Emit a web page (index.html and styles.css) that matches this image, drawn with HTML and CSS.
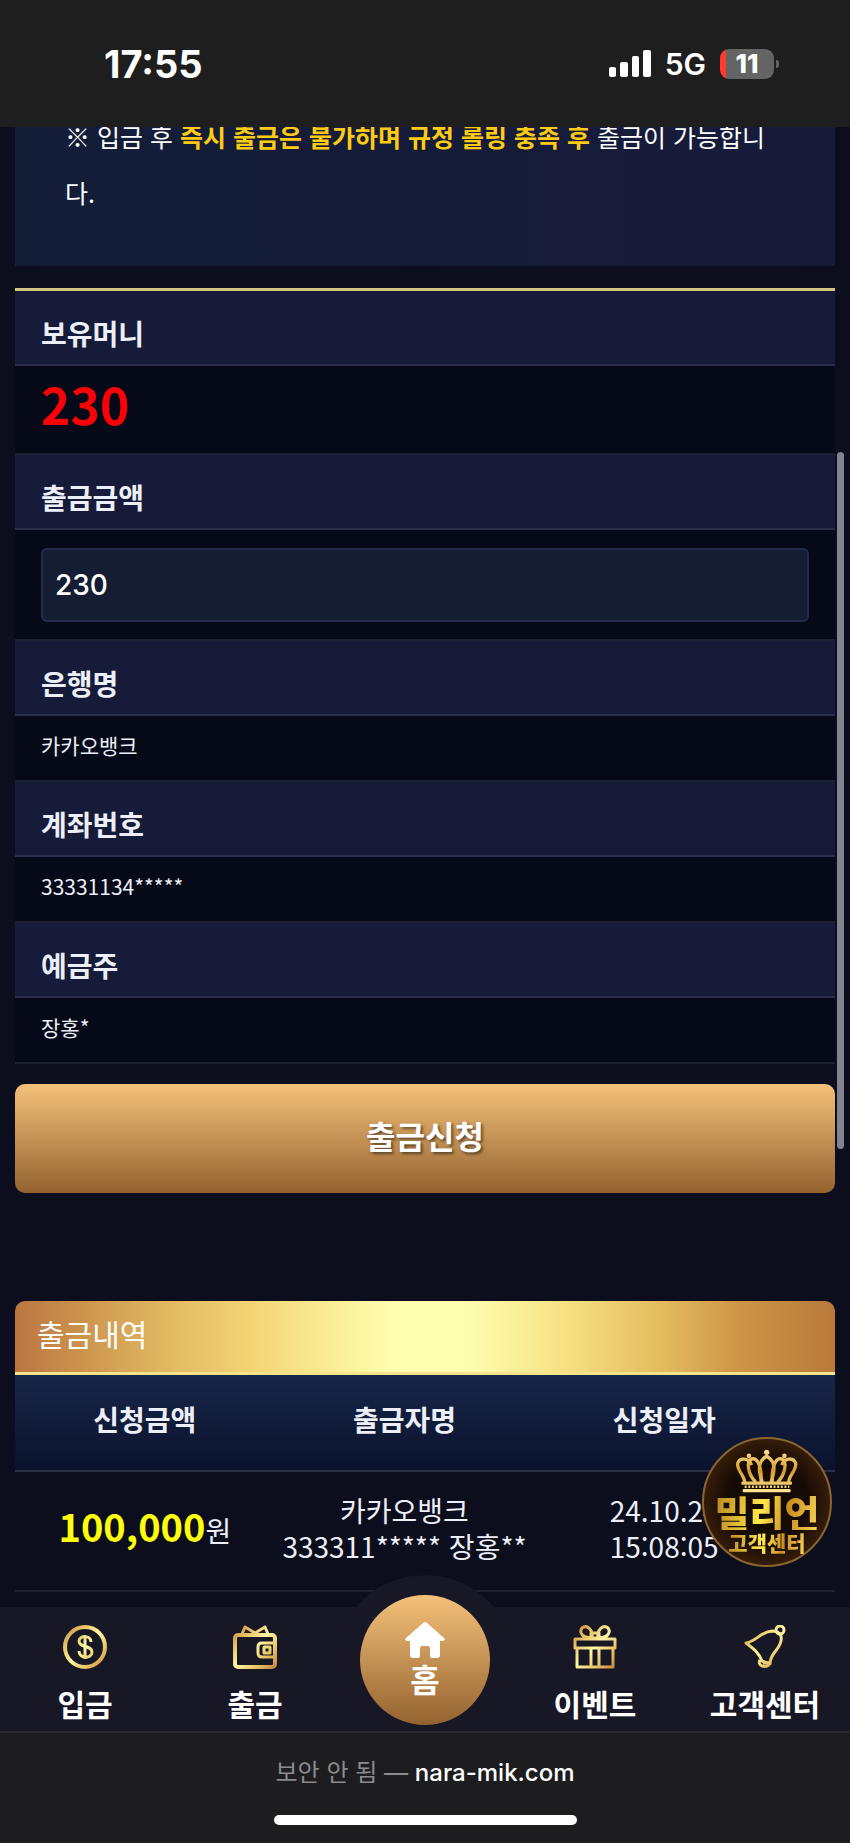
FILE: index.html
```html
<!DOCTYPE html>
<html lang="ko">
<head>
    <meta charset="UTF-8">
    <meta name="viewport" content="width=device-width, initial-scale=1.0">
    <title>출금신청</title>
    <link rel="stylesheet" href="styles.css">
</head>
<body>
    <header class="status-bar">
        <span class="clock">17:55</span>
        <div class="status-icons">
            <svg class="signal" viewBox="0 0 42 27" aria-hidden="true">
                <rect x="0" y="17" width="7" height="10" rx="2"/>
                <rect x="11" y="12" width="8" height="15" rx="2"/>
                <rect x="23" y="6" width="7" height="21" rx="2"/>
                <rect x="34" y="0" width="8" height="27" rx="2"/>
            </svg>
            <span class="network">5G</span>
            <span class="battery">11</span>
        </div>
    </header>

    <main>
        <p class="notice">※ 입금 후 <strong>즉시 출금은 불가하며 규정 롤링 충족 후</strong> 출금이 가능합니다.</p>

        <form>
            <div class="fields">
                <div class="field-name">보유머니</div>
                <div class="field-value money">230</div>
                <label class="field-name" for="amount">출금금액</label>
                <div class="field-value field-input">
                    <input type="text" id="amount" inputmode="numeric" value="230">
                </div>
                <div class="field-name">은행명</div>
                <div class="field-value">카카오뱅크</div>
                <div class="field-name">계좌번호</div>
                <div class="field-value">33331134*****</div>
                <div class="field-name">예금주</div>
                <div class="field-value">장홍*</div>
            </div>
            <button type="submit" class="submit-btn">출금신청</button>
        </form>

        <section class="history">
            <h2>출금내역</h2>
            <table>
                <thead>
                    <tr>
                        <th>신청금액</th>
                        <th>출금자명</th>
                        <th>신청일자</th>
                        <th class="state"></th>
                    </tr>
                </thead>
                <tbody>
                    <tr>
                        <td><b class="amount">100,000</b>원</td>
                        <td>카카오뱅크<br>333311***** 장홍**</td>
                        <td>24.10.24<br>15:08:05</td>
                        <td></td>
                    </tr>
                </tbody>
            </table>
            <a href="#" class="support">
                <svg viewBox="0 0 200 140" aria-hidden="true">
                    <defs>
                        <linearGradient id="crown" x1="0" y1="0" x2="0" y2="140" gradientUnits="userSpaceOnUse">
                            <stop offset="0" stop-color="#ffe89a"/>
                            <stop offset="0.5" stop-color="#d79b2c"/>
                            <stop offset="1" stop-color="#fff0a0"/>
                        </linearGradient>
                    </defs>
                    <g fill="none" stroke="url(#crown)" stroke-width="10">
                        <path d="M32 104C32 84 6 66 11 46c6-18 34-16 42 6"/>
                        <path d="M166 104c0-20 26-38 21-58-6-18-34-16-42 6"/>
                        <path d="M66 104C44 84 34 40 54 33c22-4 30 34 28 71"/>
                        <path d="M132 104c22-20 32-64 12-71-22-4-30 34-28 71"/>
                        <path d="M86 104C72 66 72 40 99 25c27 15 27 41 13 79"/>
                    </g>
                    <g fill="url(#crown)">
                        <circle cx="99" cy="13" r="8"/>
                        <circle cx="45" cy="24" r="7"/>
                        <circle cx="153" cy="24" r="7"/>
                        <rect x="22" y="102" width="154" height="10" rx="3"/>
                        <rect x="26" y="125" width="146" height="10" rx="3"/>
                    </g>
                    <path d="M32 118h136" stroke="#f5d469" stroke-width="8" stroke-dasharray="6 5"/>
                </svg>
                <span class="brand">밀리언</span>
                <span class="center">고객센터</span>
            </a>
        </section>
    </main>
    <div class="scroll-thumb"></div>

    <nav class="tab-bar">
        <a href="#">
            <svg class="icon" viewBox="0 0 44 44" aria-hidden="true">
                <defs>
                    <linearGradient id="gold" x1="0" y1="0" x2="44" y2="44" gradientUnits="userSpaceOnUse">
                        <stop offset="0" stop-color="#c67d3c"/>
                        <stop offset="0.28" stop-color="#e9c868"/>
                        <stop offset="0.5" stop-color="#fff6a4"/>
                        <stop offset="0.72" stop-color="#e9c868"/>
                        <stop offset="1" stop-color="#c67d3c"/>
                    </linearGradient>
                </defs>
                <circle cx="22" cy="22" r="20" stroke-width="4"/>
                <path d="M28 17c0-7-12-7-12-1 0 7 13 4 13 11 0 7-13 7-13-1M22 10v24"/>
            </svg>
            <span>입금</span>
        </a>
        <a href="#">
            <svg class="icon" viewBox="0 0 44 44" aria-hidden="true">
                <path d="M5 10h34a3 3 0 0 1 3 3v26a3 3 0 0 1-3 3H5a3 3 0 0 1-3-3V13a3 3 0 0 1 3-3z" stroke-width="4"/>
                <path d="M9 9l3-7 10 6-5 3M35 9l-3-7-10 6 5 3M42 18H29q-4 0-4 4v6q0 4 4 4h13"/>
                <rect x="31" y="22" width="6" height="6"/>
            </svg>
            <span>출금</span>
        </a>
        <a href="#" class="home">
            <svg viewBox="0 0 40 36" aria-hidden="true">
                <path d="M18 1q2-2 4 0l17 15q2 2-1 3h-3v14q0 3-3 3h-5q-2 0-2-2v-8q0-2-2-2h-6q-2 0-2 2v8q0 2-2 2H8q-3 0-3-3V19H2q-3-1-1-3z"/>
            </svg>
            <span>홈</span>
        </a>
        <a href="#">
            <svg class="icon" viewBox="0 0 44 44" aria-hidden="true">
                <path d="M2 14h40v9H2zM4 23h36v19H4zM18 23v19M26 23v19M19 12C9 14 6 7 9 3c5-4 11 2 10 9zM25 12c10 2 13-5 10-9-5-4-11 2-10 9zM18 8h8v5h-8z"/>
            </svg>
            <span>이벤트</span>
        </a>
        <a href="#">
            <svg class="icon" viewBox="0 0 44 44" aria-hidden="true">
                <path d="M3 18C14 16 17 7 29 6c9 0 11 6 8 13-3 8-10 10-10 20l-8-3c-3-8-8-12-16-18z"/>
                <circle cx="37" cy="5" r="4"/>
                <path d="M17 35c-3 6 5 8 9 5M20 38h7"/>
            </svg>
            <span>고객센터</span>
        </a>
    </nav>

    <footer class="address-bar">
        <p>보안 안 됨 — <b>nara-mik.com</b></p>
        <div class="home-indicator"></div>
    </footer>
</body>
</html>
```

FILE: styles.css
```css
* {
    margin: 0;
    padding: 0;
    box-sizing: border-box;
}

body {
    position: relative;
    font-family: 'Noto Sans CJK KR', sans-serif;
    background: #0c0e1d;
    color: #eceef8;
}

a {
    color: inherit;
    text-decoration: none;
}

/* status bar */
.status-bar {
    position: fixed;
    top: 0;
    left: 0;
    right: 0;
    z-index: 10;
    height: 127px;
    padding: 0 76px 0 104px;
    display: flex;
    justify-content: space-between;
    align-items: center;
    background: #1e1e1e;
    color: #fff;
    font-family: 'Inter', sans-serif;
}

.clock {
    font-size: 38px;
    font-weight: 700;
}

.status-icons {
    display: flex;
    align-items: center;
    gap: 14px;
}

.signal {
    width: 42px;
    height: 27px;
    fill: #fff;
}

.network {
    font-size: 30px;
    font-weight: 600;
}

.battery {
    position: relative;
    width: 54px;
    height: 30px;
    border-radius: 9px;
    background: linear-gradient(to right, #ff3b30 6px, #646464 6px);
    font-size: 26px;
    font-weight: 800;
    line-height: 30px;
    text-align: center;
}

.battery::after {
    content: "";
    position: absolute;
    right: -5px;
    top: 11px;
    width: 3px;
    height: 8px;
    border-radius: 0 4px 4px 0;
    background: #646464;
}

main {
    padding: 0 15px 15px;
}

.notice {
    padding: 108px 50px 46px;
    background: linear-gradient(to right, #131d38, #171b3a);
    color: #fff;
    font-size: 25px;
    line-height: 56px;
    word-break: break-all;
}

.notice strong {
    color: #ffcb12;
}

/* withdraw form */
.fields {
    margin-top: 22px;
    border-top: 3px solid #d2c67c;
}

.field-name {
    display: block;
    padding: 12px 26px 0;
    background: #161b39;
    border-bottom: 2px solid #2b2f4c;
    font-size: 28px;
    font-weight: 700;
    line-height: 61px;
}

.field-value {
    padding: 0 26px 6px;
    background: #060a18;
    border-bottom: 2px solid #1c2030;
    font-size: 21px;
    line-height: 58px;
}

.money {
    padding-bottom: 12px;
    color: #fb0007;
    font-size: 50px;
    font-weight: 700;
    line-height: 75px;
}

.field-input {
    padding: 18px 26px 17px;
}

.field-value input {
    display: block;
    width: 100%;
    height: 74px;
    padding: 0 12px;
    border: 2px solid #242a4d;
    border-radius: 6px;
    background: #151d33;
    color: #fff;
    font-family: 'Inter', sans-serif;
    font-size: 28px;
    font-weight: 500;
}

.submit-btn {
    display: block;
    width: 100%;
    height: 109px;
    margin-top: 20px;
    padding-bottom: 8px;
    border: none;
    border-radius: 10px;
    background: linear-gradient(#f4c17a, #94622f);
    color: #fff;
    font-family: inherit;
    font-size: 32px;
    font-weight: 700;
    text-shadow: 2px 2px 3px rgba(0, 0, 0, 0.5);
    cursor: pointer;
}

/* history */
.history {
    position: relative;
    margin-top: 108px;
}

.history h2 {
    padding: 0 22px 6px;
    border-bottom: 3px solid #f4e48c;
    border-radius: 10px 10px 0 0;
    background: linear-gradient(to right, #bb7640, #e0b760 18%, #f5d878 30%, #ffffb0 46%, #ffffb0 55%, #f5de80 68%, #e3bb5f 79%, #cf9648 88%, #b9793b);
    color: #fff;
    font-size: 30px;
    font-weight: 400;
    line-height: 65px;
}

.history table {
    width: 100%;
    border-collapse: collapse;
    table-layout: fixed;
    text-align: center;
}

.history th {
    height: 96px;
    padding-bottom: 8px;
    border-bottom: 2px solid #2b3049;
    font-size: 28px;
}

.history thead {
    background: linear-gradient(#182649, #0a122c);
}

.history .state {
    width: 5%;
}

.history td {
    height: 120px;
    padding-bottom: 6px;
    border-bottom: 2px solid #20212f;
    font-size: 28px;
    line-height: 36px;
    white-space: nowrap;
}

.amount {
    color: #ffff0a;
    font-size: 38px;
}

.support {
    position: absolute;
    right: 3px;
    bottom: 25px;
    width: 130px;
    height: 130px;
    padding-top: 9px;
    display: flex;
    flex-direction: column;
    align-items: center;
    border: 2px solid #8a662e;
    border-radius: 50%;
    background: radial-gradient(circle, #160a04 45%, #2b1607 62%, #563511);
}

.support svg {
    width: 66px;
    height: 46px;
    flex-shrink: 0;
}

.brand,
.center {
    background: linear-gradient(100deg, #b88420, #ffe94a 45%, #c98f22 70%, #f7d75c);
    background-clip: text;
    -webkit-background-clip: text;
    color: transparent;
}

.brand {
    font-size: 38px;
    font-weight: 900;
    line-height: 36px;
}

.center {
    font-size: 21px;
    font-weight: 900;
    line-height: 24px;
}

.scroll-thumb {
    position: absolute;
    top: 452px;
    right: 6px;
    width: 7px;
    height: 697px;
    border-radius: 4px;
    background: #82838f;
}

/* bottom navigation */
.tab-bar {
    position: relative;
    display: grid;
    grid-template-columns: repeat(5, 1fr);
    height: 124px;
    background: #171726;
    color: #fff;
    font-size: 30px;
    font-weight: 700;
    line-height: 44px;
}

.tab-bar::before {
    content: "";
    position: absolute;
    left: calc(50% - 90px);
    top: -32px;
    width: 180px;
    height: 156px;
    border-radius: 90px 90px 0 0;
    background: #171726;
}

.tab-bar a {
    position: relative;
    padding-top: 18px;
    display: flex;
    flex-direction: column;
    align-items: center;
    gap: 12px;
}

.icon {
    width: 44px;
    height: 44px;
    fill: none;
    stroke: url(#gold);
    stroke-width: 3;
    stroke-linejoin: round;
}

.tab-bar .home {
    justify-self: center;
    width: 130px;
    height: 130px;
    margin-top: -12px;
    padding-top: 27px;
    gap: 0;
    border-radius: 50%;
    background: linear-gradient(#f4c17a, #94622f);
    font-size: 32px;
    line-height: 40px;
}

.home svg {
    width: 40px;
    height: 36px;
    fill: #fff;
}

/* browser bar */
.address-bar {
    height: 113px;
    padding-top: 22px;
    display: flex;
    flex-direction: column;
    align-items: center;
    gap: 24px;
    border-top: 2px solid #29292d;
    background: #1d1d1f;
    color: #8b8b8f;
    font-family: 'Inter', 'Noto Sans CJK KR', sans-serif;
    font-size: 24px;
    line-height: 36px;
}

.address-bar b {
    color: #fff;
    font-weight: 500;
}

.home-indicator {
    width: 303px;
    height: 10px;
    border-radius: 5px;
    background: #fff;
}
```
